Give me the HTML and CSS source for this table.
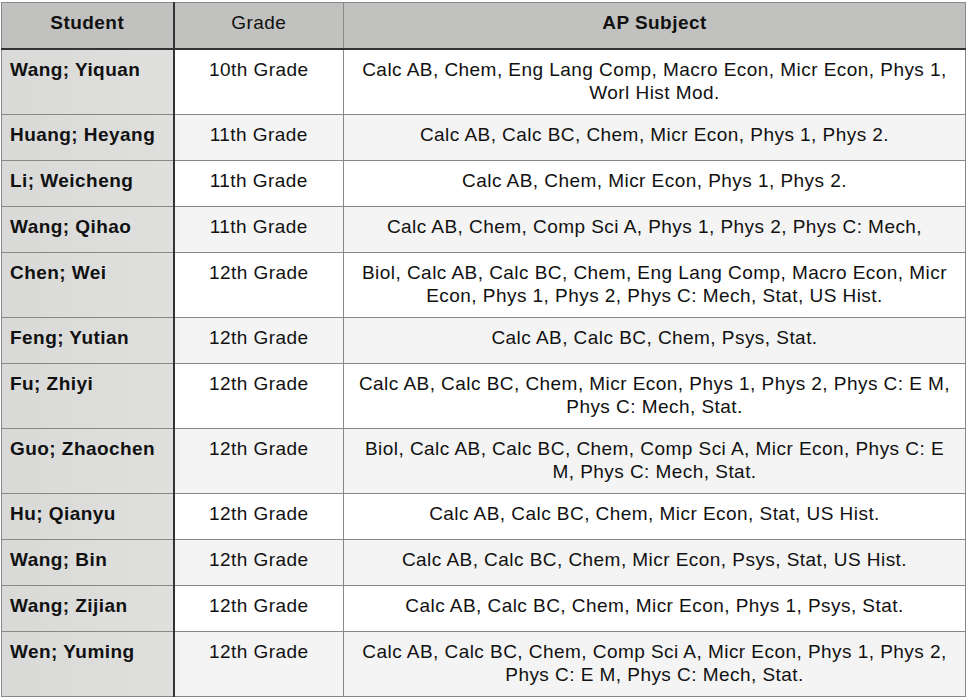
FILE: index.html
```html
<!DOCTYPE html>
<html>
<head>
<meta charset="utf-8">
<link rel="stylesheet" href="styles.css">
</head>
<body>
<table class="grid">
  <colgroup>
    <col class="c-student">
    <col class="c-grade">
    <col class="c-ap">
  </colgroup>
  <thead>
    <tr>
      <th class="h-student">Student</th>
      <th class="h-grade">Grade</th>
      <th class="h-ap">AP Subject</th>
    </tr>
  </thead>
  <tbody>
    <tr><td class="name">Wang; Yiquan</td><td class="grade">10th Grade</td><td class="ap">Calc AB, Chem, Eng Lang Comp, Macro Econ, Micr Econ, Phys 1, Worl Hist Mod.</td></tr>
    <tr><td class="name">Huang; Heyang</td><td class="grade">11th Grade</td><td class="ap">Calc AB, Calc BC, Chem, Micr Econ, Phys 1, Phys 2.</td></tr>
    <tr><td class="name">Li; Weicheng</td><td class="grade">11th Grade</td><td class="ap">Calc AB, Chem, Micr Econ, Phys 1, Phys 2.</td></tr>
    <tr><td class="name">Wang; Qihao</td><td class="grade">11th Grade</td><td class="ap">Calc AB, Chem, Comp Sci A, Phys 1, Phys 2, Phys C: Mech,</td></tr>
    <tr><td class="name">Chen; Wei</td><td class="grade">12th Grade</td><td class="ap">Biol, Calc AB, Calc BC, Chem, Eng Lang Comp, Macro Econ, Micr Econ, Phys 1, Phys 2, Phys C: Mech, Stat, US Hist.</td></tr>
    <tr><td class="name">Feng; Yutian</td><td class="grade">12th Grade</td><td class="ap">Calc AB, Calc BC, Chem, Psys, Stat.</td></tr>
    <tr><td class="name">Fu; Zhiyi</td><td class="grade">12th Grade</td><td class="ap">Calc AB, Calc BC, Chem, Micr Econ, Phys 1, Phys 2, Phys C: E M, Phys C: Mech, Stat.</td></tr>
    <tr><td class="name">Guo; Zhaochen</td><td class="grade">12th Grade</td><td class="ap">Biol, Calc AB, Calc BC, Chem, Comp Sci A, Micr Econ, Phys C: E M, Phys C: Mech, Stat.</td></tr>
    <tr><td class="name">Hu; Qianyu</td><td class="grade">12th Grade</td><td class="ap">Calc AB, Calc BC, Chem, Micr Econ, Stat, US Hist.</td></tr>
    <tr><td class="name">Wang; Bin</td><td class="grade">12th Grade</td><td class="ap">Calc AB, Calc BC, Chem, Micr Econ, Psys, Stat, US Hist.</td></tr>
    <tr><td class="name">Wang; Zijian</td><td class="grade">12th Grade</td><td class="ap">Calc AB, Calc BC, Chem, Micr Econ, Phys 1, Psys, Stat.</td></tr>
    <tr><td class="name">Wen; Yuming</td><td class="grade">12th Grade</td><td class="ap">Calc AB, Calc BC, Chem, Comp Sci A, Micr Econ, Phys 1, Phys 2, Phys C: E M, Phys C: Mech, Stat.</td></tr>
  </tbody>
</table>
</body>
</html>
```
FILE: styles.css
```css
html, body {
  margin: 0;
  padding: 0;
  background: #ffffff;
}
body {
  padding: 2px 0 0 1px;
  font-family: "Liberation Sans", Arial, sans-serif;
  font-size: 19px;
  letter-spacing: 0.45px;
  color: #111;
}
.grid {
  border-collapse: collapse;
  width: 964px;
  table-layout: fixed;
  border: 1px solid #8a8a8a;
}
.c-student { width: 172px; }
.c-grade { width: 170px; }
.c-ap { width: 622px; }
tr { height: 46px; }
th, td {
  line-height: 23px;
  padding: 8px 8px 10px 8px;
  vertical-align: top;
  border: 1px solid #888;
}
th {
  background: #c1c2c0;
  text-align: center;
  vertical-align: top;
  border-bottom: 2px solid #333;
  padding-top: 8px;
  padding-bottom: 12px;
}
.h-grade { font-weight: normal; }
.h-student, .h-ap { font-weight: bold; }
th.h-student { border-right: 2px solid #333; }
td.name {
  font-weight: bold;
  background: linear-gradient(to right, #d9dad8, #dfe0de);
  border-right: 2px solid #333;
  text-align: left;
}
td.grade, td.ap { text-align: center; }
tbody tr:nth-child(odd) td.grade,
tbody tr:nth-child(odd) td.ap { background: #ffffff; }
tbody tr:nth-child(even) td.grade,
tbody tr:nth-child(even) td.ap { background: #f4f4f4; }
```
